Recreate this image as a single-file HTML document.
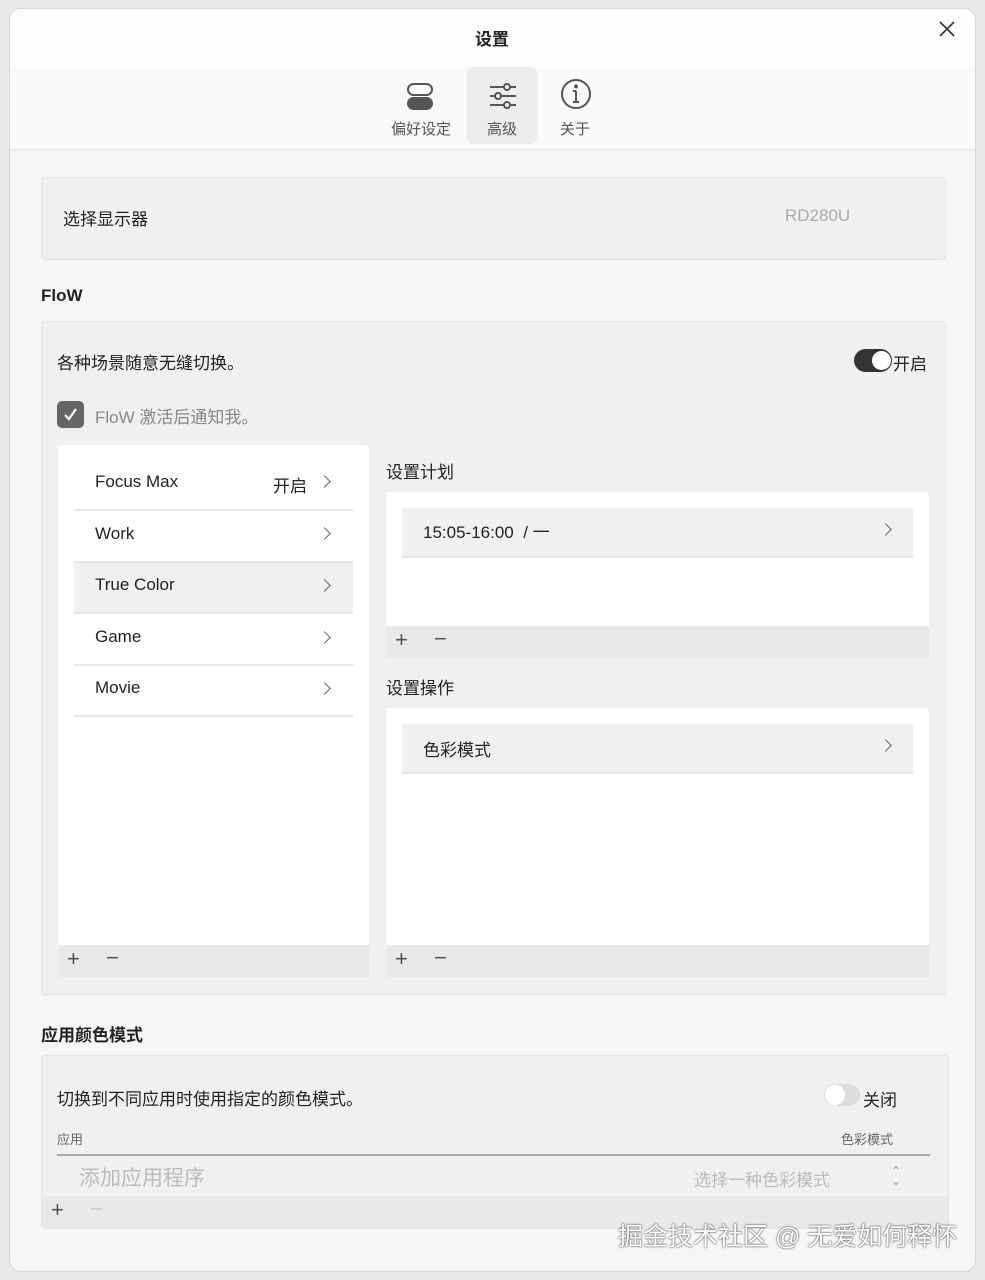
<!DOCTYPE html>
<html><head><meta charset="utf-8"><style>
*{box-sizing:border-box;margin:0;padding:0}
body{width:985px;height:1280px;background:#e9e9e9;font-family:"Liberation Sans","Noto Sans CJK SC",sans-serif;color:#222;position:relative;overflow:hidden}
.a{position:absolute}
.win{left:9px;top:8px;width:967px;height:1264px;background:#f6f6f6;border-radius:12px;border:1px solid #d6d6d6;overflow:hidden}
.panel{background:#f0f0f0;border:1px solid #e4e4e4;border-radius:4px}
.white{background:#fff}
.t{font-size:17px;white-space:nowrap;margin-top:-3px}
.chev{width:9px;height:9px;border-right:1.5px solid #666;border-top:1.5px solid #666;transform:rotate(45deg)}
.row{left:64px;width:279px;height:51px;border-bottom:2px solid #e6e6e6}
.bar{background:#e8e8e8}
.pm{font-size:22px;color:#555;font-weight:300}
</style></head><body>
<div class="a win">
 <div class="a" style="left:0;top:0;width:967px;height:58px;background:#fdfdfd"></div>
 <div class="a" style="left:0;top:58px;width:967px;height:84px;background:#fafafa;border-bottom:2px solid #ececec"></div>
 <div class="a t" style="left:465px;top:19px;font-weight:bold">设置</div>
 <svg class="a" style="left:929px;top:12px" width="16" height="16" viewBox="0 0 16 16" stroke="#333" stroke-width="1.6"><path d="M1 1L15 15M15 1L1 15"/></svg>
 <div class="a" style="left:457px;top:58px;width:70px;height:77px;background:#ececec;border-radius:6px"></div>
 <div class="a" style="left:397px;top:74px;width:26px;height:13px;border:2.5px solid #555;border-radius:7px"></div>
 <div class="a" style="left:397px;top:88px;width:26px;height:13px;background:#555;border-radius:7px"></div>
 <svg class="a" style="left:478px;top:72px" width="30" height="30" viewBox="0 0 30 30" fill="none" stroke="#555" stroke-width="2"><path d="M2 6H28M2 15H28M2 24H28"/><circle cx="19" cy="6" r="3" fill="#ececec"/><circle cx="10" cy="15" r="3" fill="#ececec"/><circle cx="19" cy="24" r="3" fill="#ececec"/></svg>
 <svg class="a" style="left:550px;top:69px" width="32" height="32" viewBox="0 0 32 32" fill="none" stroke="#555" stroke-width="2"><circle cx="16" cy="16" r="14"/><path d="M16 13V24M13 24H19M13 13H16"/><circle cx="16" cy="8.5" r="1" fill="#555"/></svg>
 <div class="a" style="left:381px;top:109px;font-size:15px;color:#555">偏好设定</div>
 <div class="a" style="left:477px;top:109px;font-size:15px;color:#555">高级</div>
 <div class="a" style="left:550px;top:109px;font-size:15px;color:#555">关于</div>

 <div class="a panel" style="left:31px;top:168px;width:905px;height:83px"></div>
 <div class="a t" style="left:53px;top:199px">选择显示器</div>
 <div class="a t" style="left:775px;top:200px;color:#aaa">RD280U</div>

 <div class="a t" style="left:31px;top:280px;font-weight:bold">FloW</div>
 <div class="a panel" style="left:31px;top:312px;width:905px;height:674px"></div>
 <div class="a t" style="left:47px;top:343px">各种场景随意无缝切换。</div>
 <div class="a" style="left:844px;top:340px;width:38px;height:23px;background:#333;border-radius:12px"></div>
 <div class="a" style="left:862px;top:342px;width:19px;height:19px;background:#fff;border-radius:50%"></div>
 <div class="a t" style="left:883px;top:344px">开启</div>
 <div class="a" style="left:47px;top:392px;width:27px;height:27px;background:#666;border-radius:5px"></div>
 <svg class="a" style="left:52px;top:397px" width="17" height="17" viewBox="0 0 17 17" fill="none" stroke="#fff" stroke-width="2.2"><path d="M3 9L7 13L14 3"/></svg>
 <div class="a t" style="left:85px;top:397px;color:#888">FloW 激活后通知我。</div>

 <div class="a white" style="left:48px;top:436px;width:311px;height:532px;border-radius:4px"></div>
 <div class="a row" style="top:451px"></div><div class="a t" style="left:85px;top:466px">Focus Max</div><div class="a t" style="left:263px;top:466px">开启</div><div class="a chev" style="left:310px;top:468px"></div>
 <div class="a row" style="top:503px"></div><div class="a t" style="left:85px;top:518px">Work</div><div class="a chev" style="left:310px;top:520px"></div>
 <div class="a row" style="top:554px;background:#f0f0f0"></div><div class="a t" style="left:85px;top:569px">True Color</div><div class="a chev" style="left:310px;top:572px"></div>
 <div class="a row" style="top:606px"></div><div class="a t" style="left:85px;top:621px">Game</div><div class="a chev" style="left:310px;top:624px"></div>
 <div class="a row" style="top:657px"></div><div class="a t" style="left:85px;top:672px">Movie</div><div class="a chev" style="left:310px;top:675px"></div>
 <div class="a bar" style="left:48px;top:936px;width:311px;height:32px"></div>
 <div class="a pm" style="left:57px;top:937px">+</div><div class="a pm" style="left:96px;top:936px">−</div>

 <div class="a t" style="left:376px;top:452px">设置计划</div>
 <div class="a white" style="left:376px;top:483px;width:543px;height:166px;border-radius:4px"></div>
 <div class="a" style="left:392px;top:499px;width:511px;height:50px;background:#f0f0f0;border-bottom:2px solid #e4e4e4"></div>
 <div class="a t" style="left:413px;top:512px">15:05-16:00 &nbsp;/ 一</div><div class="a chev" style="left:871px;top:516px"></div>
 <div class="a bar" style="left:376px;top:617px;width:543px;height:32px"></div>
 <div class="a pm" style="left:385px;top:618px">+</div><div class="a pm" style="left:424px;top:617px">−</div>

 <div class="a t" style="left:376px;top:668px">设置操作</div>
 <div class="a white" style="left:376px;top:699px;width:543px;height:269px;border-radius:4px"></div>
 <div class="a" style="left:392px;top:715px;width:511px;height:50px;background:#f0f0f0;border-bottom:2px solid #e4e4e4"></div>
 <div class="a t" style="left:413px;top:730px">色彩模式</div><div class="a chev" style="left:871px;top:732px"></div>
 <div class="a bar" style="left:376px;top:936px;width:543px;height:32px"></div>
 <div class="a pm" style="left:385px;top:937px">+</div><div class="a pm" style="left:424px;top:936px">−</div>

 <div class="a t" style="left:31px;top:1015px;font-weight:bold">应用颜色模式</div>
 <div class="a panel" style="left:31px;top:1046px;width:908px;height:174px"></div>
 <div class="a t" style="left:47px;top:1079px">切换到不同应用时使用指定的颜色模式。</div>
 <div class="a" style="left:814px;top:1075px;width:36px;height:22px;background:#ddd;border-radius:11px"></div>
 <div class="a" style="left:815px;top:1076px;width:20px;height:20px;background:#fff;border-radius:50%"></div>
 <div class="a t" style="left:853px;top:1080px">关闭</div>
 <div class="a" style="left:47px;top:1120px;font-size:13px;color:#666">应用</div>
 <div class="a" style="left:831px;top:1120px;font-size:13px;color:#666">色彩模式</div>
 <div class="a" style="left:47px;top:1145px;width:873px;height:2px;background:#aaa"></div>
 <div class="a" style="left:69px;top:1153px;font-size:21px;color:#bbb">添加应用程序</div>
 <div class="a t" style="left:684px;top:1160px;color:#bbb">选择一种色彩模式</div>
 <div class="a" style="left:881px;top:1157px;font-size:12px;color:#999;line-height:10px">⌃<br>⌄</div>
 <div class="a bar" style="left:32px;top:1187px;width:906px;height:32px"></div>
 <div class="a pm" style="left:41px;top:1188px">+</div><div class="a pm" style="left:80px;top:1187px;color:#ccc">−</div>
 <div class="a" style="left:608px;top:1208px;font-size:25px;color:#fff;white-space:nowrap;text-shadow:0 0 2px #555,0 0 1px #333">掘金技术社区 @ 无爱如何释怀</div>
</div>
</body></html>
